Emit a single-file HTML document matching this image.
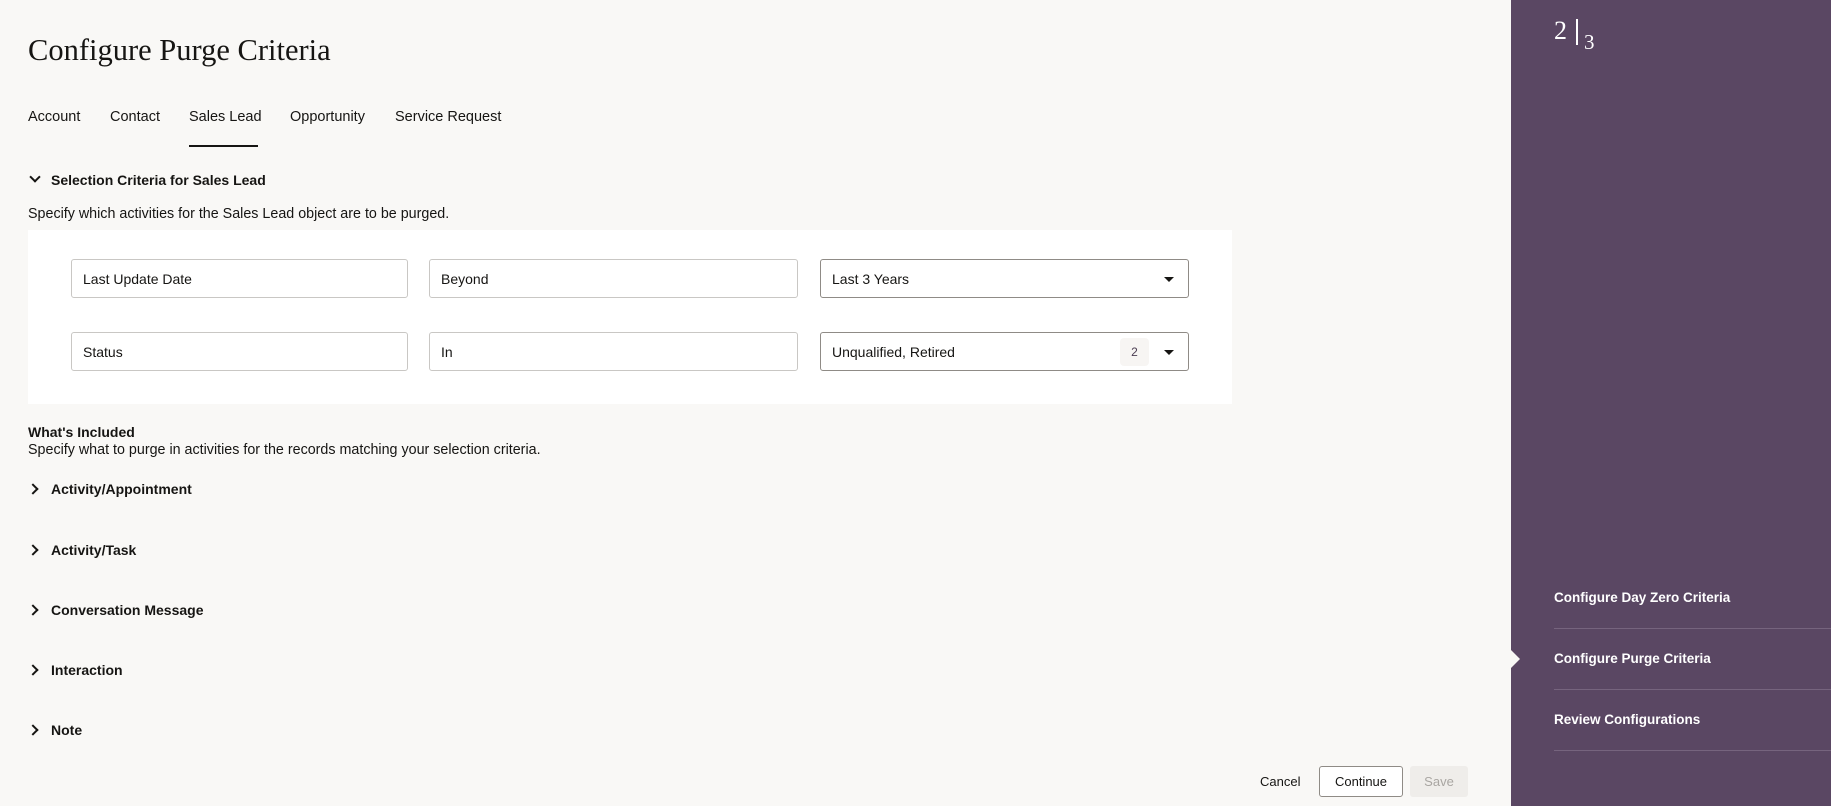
<!DOCTYPE html>
<html><head><meta charset="utf-8"><style>
*{margin:0;padding:0;box-sizing:border-box}
body{width:1831px;height:806px;background:#f9f8f6;font-family:"Liberation Sans",sans-serif;color:#161513;position:relative;overflow:hidden;font-size:15px}
.a{position:absolute;white-space:nowrap}
h1{position:absolute;left:28px;top:33px;font-family:"Liberation Serif",serif;font-weight:normal;font-size:30.5px;color:#161513}
.tab{position:absolute;top:109px;font-size:14.5px}
.field{position:absolute;height:39px;border:1px solid #c9c7c4;border-radius:3px;background:#fff;font-size:14px;padding-left:11px;line-height:39px}
.sel{border-color:#8f8b86}
.caret{position:absolute;right:14px;top:17px;width:0;height:0;border-left:5px solid transparent;border-right:5px solid transparent;border-top:5px solid #161513}
.b{font-weight:bold;font-size:14px}
.chev{position:absolute;width:8px;height:8px;border-right:2px solid #161513;border-bottom:2px solid #161513}
.side{position:absolute;left:1511px;top:0;width:320px;height:806px;background:#5a4763}
.step{position:absolute;left:43px;color:#fff;font-weight:bold;font-size:13.5px}
.ln{position:absolute;left:43px;right:0;height:1px;background:#76647e}
</style></head><body>
<h1>Configure Purge Criteria</h1>
<div class="tab" style="left:28px">Account</div>
<div class="tab" style="left:110px">Contact</div>
<div class="tab" style="left:189px">Sales Lead</div>
<div class="tab" style="left:290px">Opportunity</div>
<div class="tab" style="left:395px">Service Request</div>
<div class="a" style="left:189px;top:145px;width:69px;height:2px;background:#161513"></div>

<div class="chev" style="left:31px;top:173px;transform:rotate(45deg)"></div>
<div class="a b" style="left:51px;top:172px">Selection Criteria for Sales Lead</div>
<div class="a" style="left:28px;top:206px;font-size:14.3px">Specify which activities for the Sales Lead object are to be purged.</div>

<div class="a" style="left:28px;top:230px;width:1204px;height:174px;background:#fff"></div>
<div class="field" style="left:71px;top:259px;width:337px">Last Update Date</div>
<div class="field" style="left:429px;top:259px;width:369px">Beyond</div>
<div class="field sel" style="left:820px;top:259px;width:369px">Last 3 Years<div class="caret"></div></div>
<div class="field" style="left:71px;top:332px;width:337px">Status</div>
<div class="field" style="left:429px;top:332px;width:369px">In</div>
<div class="field sel" style="left:820px;top:332px;width:369px">Unqualified, Retired<div class="a" style="left:299px;top:5px;width:29px;height:28px;background:#f7f5f3;border-radius:4px;text-align:center;line-height:28px;font-size:12px;color:#4b3d52">2</div><div class="caret"></div></div>

<div class="a b" style="left:28px;top:424px;font-size:14px">What's Included</div>
<div class="a" style="left:28px;top:442px;font-size:14.3px">Specify what to purge in activities for the records matching your selection criteria.</div>

<div class="chev" style="left:29px;top:485px;transform:rotate(-45deg)"></div><div class="a b" style="left:51px;top:481px">Activity/Appointment</div>
<div class="chev" style="left:29px;top:546px;transform:rotate(-45deg)"></div><div class="a b" style="left:51px;top:542px">Activity/Task</div>
<div class="chev" style="left:29px;top:606px;transform:rotate(-45deg)"></div><div class="a b" style="left:51px;top:602px">Conversation Message</div>
<div class="chev" style="left:29px;top:666px;transform:rotate(-45deg)"></div><div class="a b" style="left:51px;top:662px">Interaction</div>
<div class="chev" style="left:29px;top:726px;transform:rotate(-45deg)"></div><div class="a b" style="left:51px;top:722px">Note</div>

<div class="a" style="left:1260px;top:774px;font-size:13px">Cancel</div>
<div class="a" style="left:1319px;top:766px;width:84px;height:31px;border:1px solid #8f8b86;border-radius:3px;text-align:center;line-height:29px;font-size:13px;background:#fff">Continue</div>
<div class="a" style="left:1410px;top:766px;width:58px;height:31px;background:#efedea;border-radius:3px;text-align:center;line-height:31px;font-size:13px;color:#a9a6a2">Save</div>

<div class="side">
<div class="a" style="left:43px;top:16px;color:#fff;font-family:'Liberation Serif',serif;font-size:26px">2</div>
<div class="a" style="left:65px;top:19px;width:2px;height:26px;background:#fff"></div>
<div class="a" style="left:73px;top:30px;color:#fff;font-family:'Liberation Serif',serif;font-size:21px">3</div>
<div class="a" style="left:0;top:650px;width:0;height:0;border-top:9px solid transparent;border-bottom:9px solid transparent;border-left:9px solid #f9f8f6"></div>
<div class="step" style="top:590px">Configure Day Zero Criteria</div>
<div class="ln" style="top:628px"></div>
<div class="step" style="top:651px">Configure Purge Criteria</div>
<div class="ln" style="top:689px"></div>
<div class="step" style="top:712px">Review Configurations</div>
<div class="ln" style="top:750px"></div>
</div>
</body></html>
